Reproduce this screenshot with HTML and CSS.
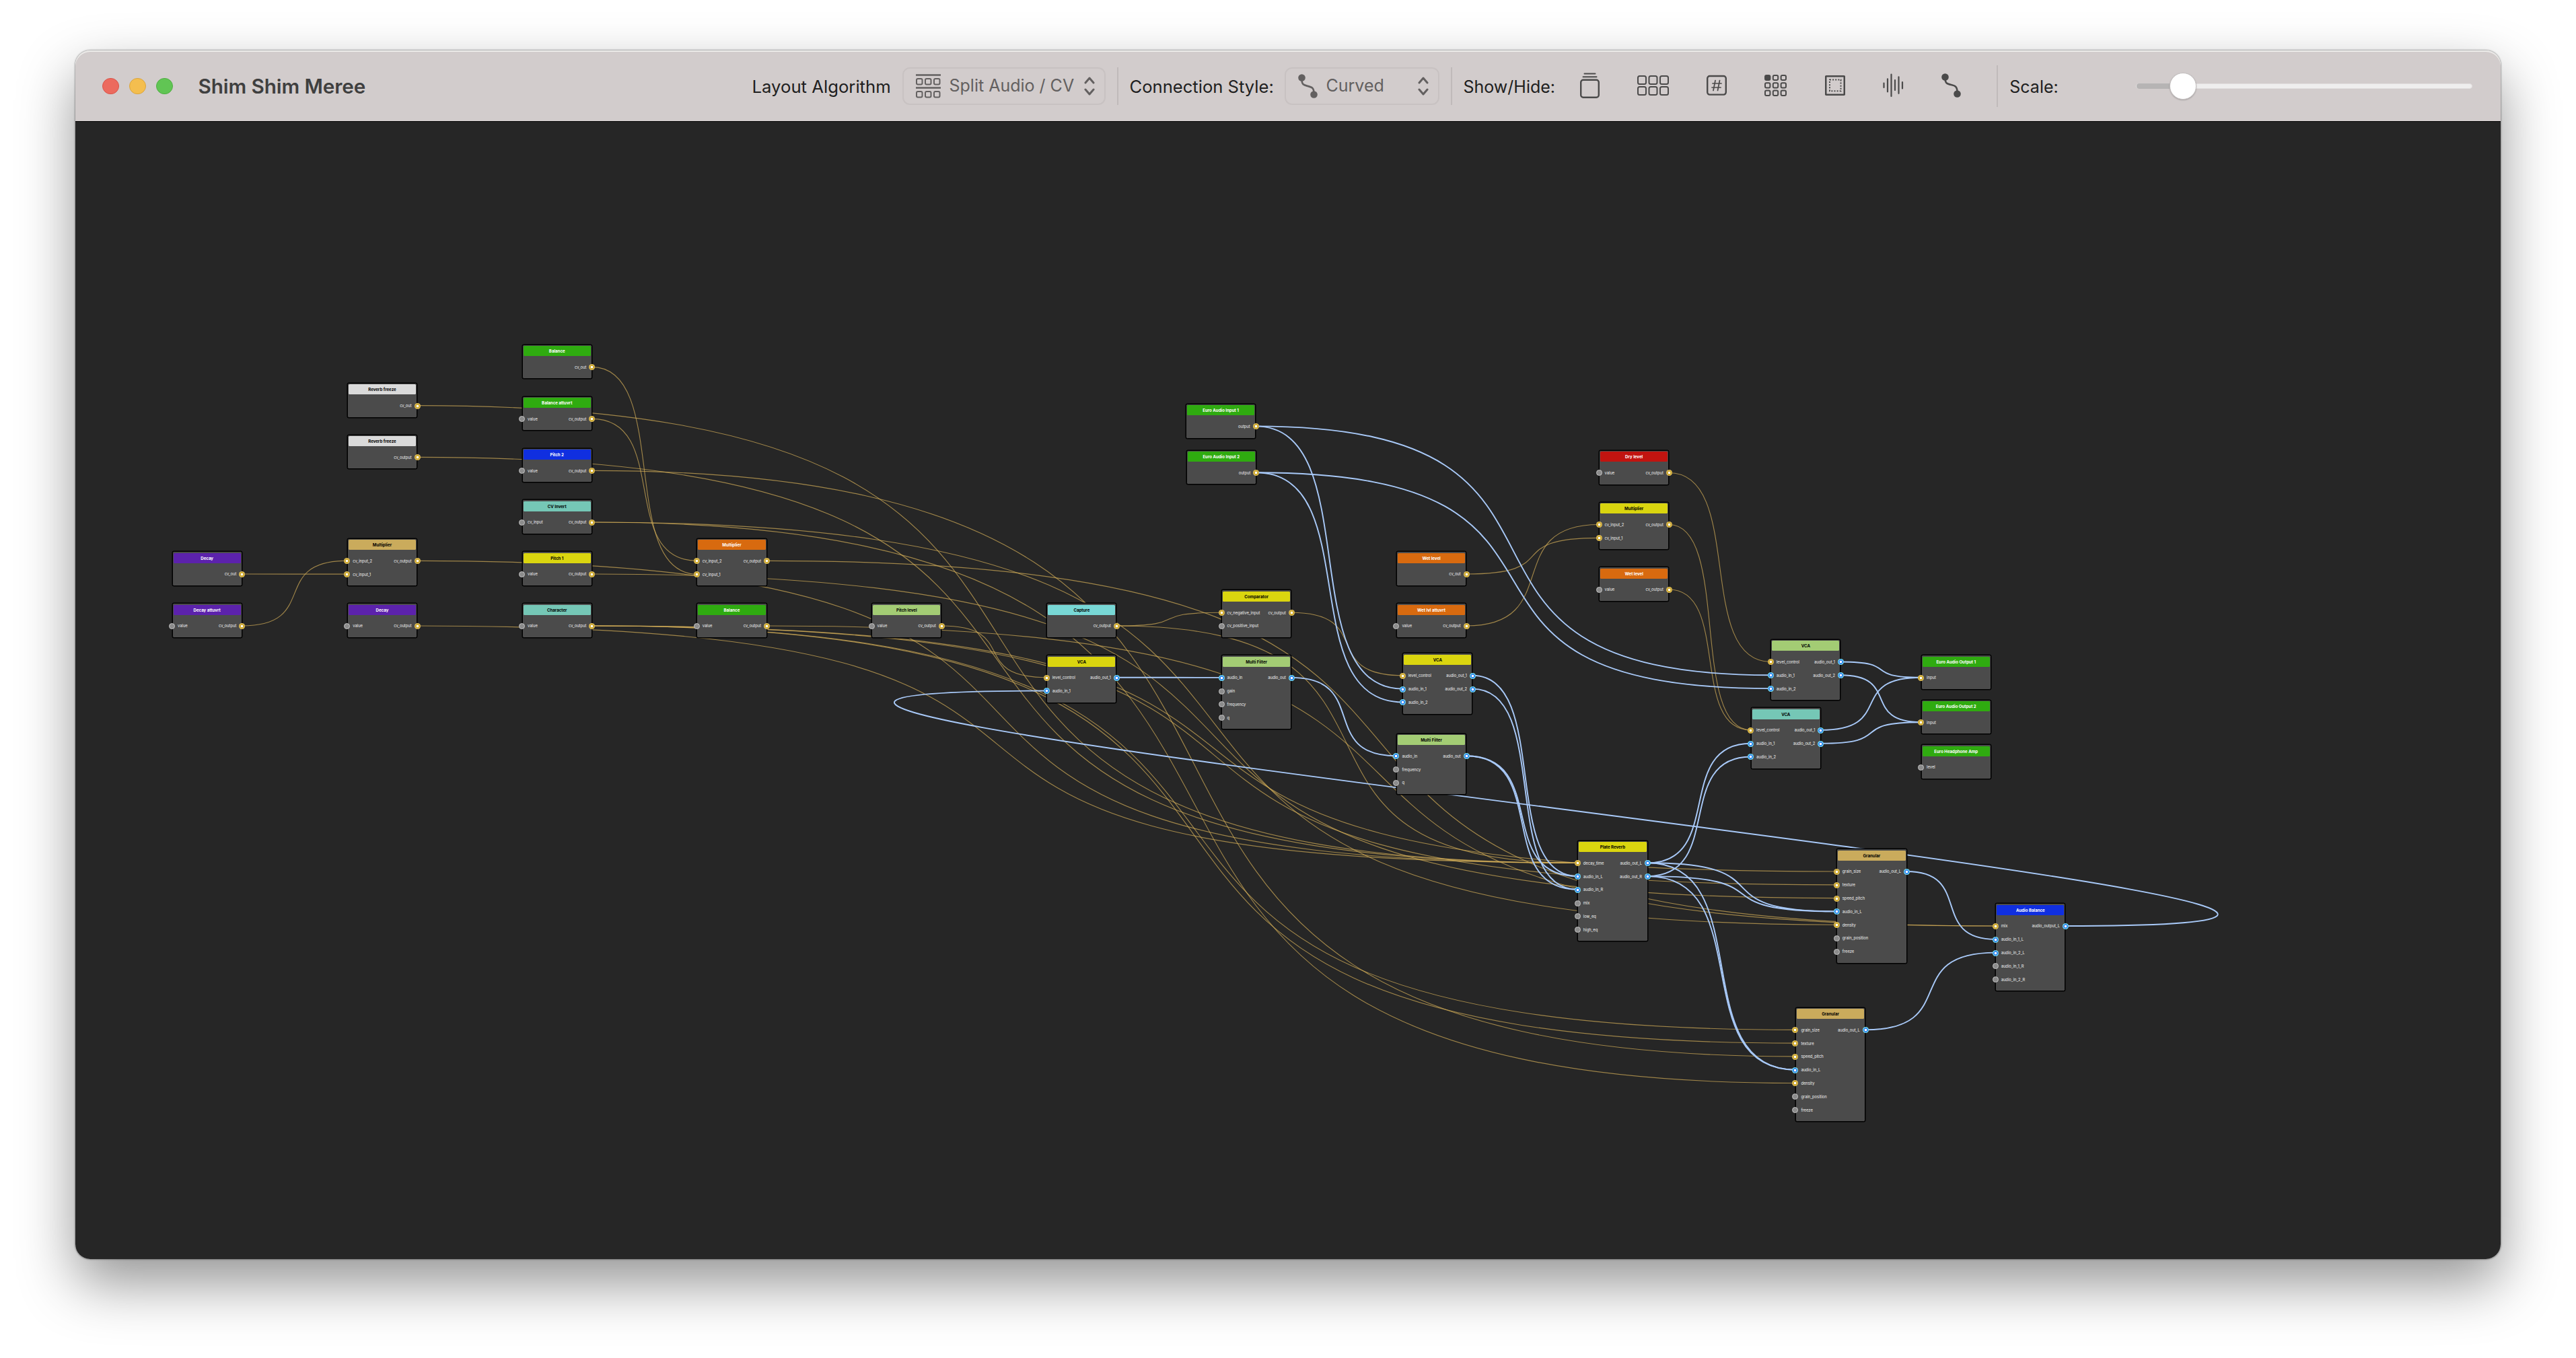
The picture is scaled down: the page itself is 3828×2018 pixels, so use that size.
FILE: index.html
```html
<!DOCTYPE html>
<html lang="en">
<head>
<meta charset="utf-8">
<title>Shim Shim Meree</title>
<link rel="stylesheet" href="styles.css">
</head>
<body>
<main class="window">
  <header class="toolbar">
    <div class="lights"><span class="light close"></span><span class="light minimize"></span><span class="light zoom"></span></div>
    <h1 class="title">Shim Shim Meree</h1>
    <div class="tools">
      <span class="label label-layout">Layout Algorithm</span>
      <button class="popup popup-layout">
        <svg class="popup-icon" width="37" height="36" viewBox="0 0 37 36" fill="none" stroke="currentColor" stroke-width="2"><path d="M0 1.5h37M0 20.5h37" stroke-width="2.4"/><rect x="1" y="7" width="8.5" height="8.5" rx="2"/><rect x="14" y="7" width="8.5" height="8.5" rx="2"/><rect x="27" y="7" width="8.5" height="8.5" rx="2"/><rect x="1" y="26" width="8.5" height="8.5" rx="2"/><rect x="14" y="26" width="8.5" height="8.5" rx="2"/><rect x="27" y="26" width="8.5" height="8.5" rx="2"/></svg>
        <span class="popup-text text-split">Split Audio / CV</span>
        <svg class="chevrons" width="16" height="28" viewBox="0 0 16 28" fill="none" stroke="currentColor" stroke-width="3" stroke-linecap="round" stroke-linejoin="round"><path d="M2 9l6-7 6 7M2 19l6 7 6-7"/></svg>
      </button>
      <i class="separator"></i>
      <span class="label label-style">Connection Style:</span>
      <button class="popup popup-style">
        <svg class="popup-icon" width="29" height="36" viewBox="0 0 29 36"><path d="M5.5 8c0 8 3 8.500 9 10s9 2 9 11" fill="none" stroke="currentColor" stroke-width="2.6"/><circle cx="5.500" cy="5.500" r="5.300" fill="currentColor"/><circle cx="23.500" cy="30.500" r="5.300" fill="currentColor"/></svg>
        <span class="popup-text text-curved">Curved</span>
        <svg class="chevrons" width="16" height="28" viewBox="0 0 16 28" fill="none" stroke="currentColor" stroke-width="3" stroke-linecap="round" stroke-linejoin="round"><path d="M2 9l6-7 6 7M2 19l6 7 6-7"/></svg>
      </button>
      <i class="separator"></i>
      <span class="label label-show">Show/Hide:</span>
      <div class="toggles">
        <svg width="29" height="40" viewBox="0 0 29 40" fill="none" stroke="currentColor" stroke-width="2.400"><path d="M6.500 1.500h16M4.500 6.200h20" stroke-width="2" stroke-linecap="round"/><rect x="1.200" y="10.700" width="26.600" height="26" rx="3.500"/></svg>
        <svg width="47" height="40" viewBox="0 0 47 40" fill="none" stroke="currentColor" stroke-width="2"><rect x="1" y="5" width="12" height="12" rx="2.500"/><rect x="17.500" y="5" width="12" height="12" rx="2.500"/><rect x="34" y="5" width="12" height="12" rx="2.500"/><rect x="1" y="21" width="12" height="12" rx="2.500"/><rect x="17.500" y="21" width="12" height="12" rx="2.500"/><rect x="34" y="21" width="12" height="12" rx="2.500"/></svg>
        <svg width="30" height="40" viewBox="0 0 30 40" fill="none" stroke="currentColor" stroke-width="2.400"><rect x="1.200" y="5" width="27.600" height="27.600" rx="3.500"/><path d="M13 11.500l-3 15M19.500 11.500l-3 15M9 16h13M8 22h13" stroke-width="1.700" stroke-linecap="round"/></svg>
        <svg width="33" height="40" viewBox="0 0 33 40" fill="none" stroke="currentColor" stroke-width="2"><rect x="1" y="4" width="7.400" height="7" rx="2" fill="currentColor"/><rect x="12.800" y="4" width="7.400" height="7" rx="2"/><rect x="24.600" y="4" width="7.400" height="7" rx="2"/><rect x="1" y="15.200" width="7.400" height="7.400" rx="2"/><rect x="12.800" y="15.200" width="7.400" height="7.400" rx="2"/><rect x="24.600" y="15.200" width="7.400" height="7.400" rx="2"/><rect x="1" y="26.600" width="7.400" height="7.400" rx="2"/><rect x="12.800" y="26.600" width="7.400" height="7.400" rx="2"/><rect x="24.600" y="26.600" width="7.400" height="7.400" rx="2"/></svg>
        <svg width="30" height="40" viewBox="0 0 30 40" fill="none" stroke="currentColor"><rect x="1.200" y="5.200" width="27.600" height="27.600" rx="1" stroke-width="2.600"/><rect x="7" y="10.500" width="16.500" height="16.700" stroke-width="2" stroke-dasharray="2 2.120"/></svg>
        <svg width="31" height="40" viewBox="0 0 31 40" fill="none" stroke="currentColor" stroke-width="2.200" stroke-linecap="round"><path d="M1.500 15.500v6.500M7 9.300v19M12.500 2.500v32.500M18 11v15M23.500 6.300v24.500M29 14v9.500"/></svg>
        <svg width="29" height="40" viewBox="0 0 29 40"><path d="M5.500 8c0 8 3 8.700 9 10s9 2.500 9 11" fill="none" stroke="currentColor" stroke-width="2.600"/><circle cx="5.500" cy="6.500" r="5.300" fill="currentColor"/><circle cx="23.500" cy="31.500" r="5.300" fill="currentColor"/></svg>
      </div>
      <i class="separator tall"></i>
      <span class="label label-scale">Scale:</span>
      <div class="slider"><span class="slider-fill"></span><span class="slider-knob"></span></div>
    </div>
  </header>
  <section class="patch" id="patch">
    <svg class="cables" id="cables" viewBox="112 181 3604 1690"></svg>
  </section>
</main>
<script src="patch.js"></script>
</body>
</html>
```
FILE: styles.css
```css
* { box-sizing: border-box; }
body {
  margin: 0;
  height: 2018px;
  overflow: hidden;
  background: #fff;
  font-family: Inter, "Liberation Sans", sans-serif;
  padding: 75px 112px 0;
}
.window {
  width: 3604px;
  height: 1796px;
  border-radius: 22px;
  box-shadow: 0 0 2px 1px rgba(0, 0, 0, .3), 0 36px 84px rgba(0, 0, 0, .42);
  display: flex;
  flex-direction: column;
}
.toolbar {
  height: 106px;
  flex: none;
  display: flex;
  align-items: center;
  padding: 1px 40px 0;
  background: #d2cccc;
  border-bottom: 1.500px solid #000;
  box-shadow: inset 0 2px 0 #ecebe9;
  border-radius: 22px 22px 0 0;
}
.lights { display: flex; gap: 15.500px; }
.light { width: 24.500px; height: 24.500px; border-radius: 50%; border: 1px solid; }
.close { background: #ec6a5e; border-color: #d9544a; }
.minimize { background: #f4be4f; border-color: #dba53c; }
.zoom { background: #61c554; border-color: #4fae42; }
.title {
  margin: 0 0 0 38px;
  width: 823px;
  font-size: 29.700px;
  font-weight: 600;
  letter-spacing: -.1px;
  line-height: 40px;
  color: #3f3f3f;
  white-space: nowrap;
}
.tools { display: flex; align-items: center; gap: 17px; }
.label {
  font-size: 25px;
  line-height: 32px;
  color: #202020;
  white-space: nowrap;
  padding-top: 1px;
}
.label-layout { width: 206px; font-size: 25.700px; }
.label-style { width: 213px; font-size: 25.600px; }
.label-show { width: 136px; }
.label-scale { width: 74px; }
.popup {
  height: 56px;
  margin: 0;
  border: 2px solid #c8c2c2;
  border-radius: 11px;
  background: none;
  font: inherit;
  color: #636060;
  display: flex;
  align-items: center;
}
.popup-layout { width: 302px; padding: 0 14px 0 18px; }
.popup-style { width: 230px; padding: 0 14px 0 18px; }
.popup-text { font-size: 25px; line-height: 32px; margin: 0 0 2px 13px; white-space: nowrap; }
.chevrons { margin-left: auto; }
.separator { width: 2px; height: 56px; background: #c0baba; }
.separator.tall { height: 62px; margin-left: 36px; }
.toggles { display: flex; gap: 56.300px; margin-left: 20px; color: #4b4a4a; }
.slider {
  width: 500px;
  height: 8px;
  border-radius: 4px;
  margin-left: 97px;
  background: #efeeee;
  border: 1px solid #e2dfdf;
  display: flex;
  align-items: center;
}
.slider-fill { width: 56px; height: 8px; flex: none; background: #b6b4b4; border-radius: 4px 0 0 4px; }
.slider-knob {
  width: 40px;
  height: 40px;
  flex: none;
  margin-left: -7px;
  border-radius: 50%;
  background: #fff;
  border: 1px solid #c4c0c0;
  box-shadow: 0 1px 2px rgba(0, 0, 0, .2);
}
.patch {
  position: relative;
  flex: 1;
  background: #262626;
  border-radius: 0 0 22px 22px;
  overflow: hidden;
}
.cables { display: block; width: 3604px; height: 1690px; fill: none; }
.cable-cv { stroke: #d8b25a; stroke-opacity: .68; stroke-width: 1.150; }
.cable-audio { stroke: #a9caf9; stroke-width: 1.900; }

.node {
  position: absolute;
  width: 104.300px;
  border: 1px solid #000;
  border-radius: 2.500px;
  box-shadow: 0 0 0 .500px #000;
  background: #4b4b4b;
  padding: 1.700px 1px 6.800px;
}
.node-title {
  height: 15px;
  border-radius: 1.500px;
  font-size: 6.100px;
  font-weight: 700;
  line-height: 15px;
  text-align: center;
  white-space: nowrap;
  color: #fff;
}
.dark { color: #000; }
.green { background: #2fab10; }
.white { background: #dadada; }
.purple { background: #5c22ac; }
.tan { background: #caab5c; }
.blue { background: #102fe0; }
.teal { background: #75c7b6; }
.yellow { background: #dad50f; }
.orange { background: #d86a0f; }
.lime { background: #a3cc74; }
.cyan { background: #78d8d6; }
.red { background: #c11410; }
.ports { display: flex; justify-content: space-between; margin: 6.700px -6.500px 0; }
.port { display: flex; align-items: center; gap: 4px; height: 19.800px; }
.outputs .port { flex-direction: row-reverse; }
.port-name { font-size: 5.800px; line-height: 8px; color: #f0f0f0; white-space: nowrap; }
.jack { width: 9px; height: 9px; border-radius: 50%; display: block; }
.jack-off { background: #8c8c8c; border: 1px solid #c4c4c4; }
.jack-cv { background: radial-gradient(circle, #fff 0 1.500px, #cda92f 2.100px 3.200px, #dfbd5a 3.700px); }
.jack-audio { background: radial-gradient(circle, #fff 0 1.500px, #2f80ee 2.100px 3px, #6fdcf0 3.600px); }
```
FILE: patch.js
```javascript
// Each module: x and y of its first jack row, title, colour, inputs, outputs.
// A port is written "kind:name"; kinds are cv, audio and off (nothing patched).
const modules = {
  decayKnob: [255.9, 853, 'Decay', 'purple', [], ['cv:cv_out']],
  decayAtt: [255.9, 930, 'Decay attuvrt', 'purple', ['off:value'], ['cv:cv_output']],
  freeze1: [516.2, 602.6, 'Reverb freeze', 'white', [], ['cv:cv_out']],
  freeze2: [516.2, 679.3, 'Reverb freeze', 'white', [], ['cv:cv_output']],
  decayMult: [516.2, 833.3, 'Multiplier', 'tan', ['cv:cv_input_2', 'cv:cv_input_1'], ['cv:cv_output']],
  decay: [516.2, 930, 'Decay', 'purple', ['off:value'], ['cv:cv_output']],
  balanceKnob: [776, 545.3, 'Balance', 'green', [], ['cv:cv_out']],
  balanceAtt: [776, 622.3, 'Balance attuvrt', 'green', ['off:value'], ['cv:cv_output']],
  pitch2: [776, 699.3, 'Pitch 2', 'blue', ['off:value'], ['cv:cv_output']],
  invert: [776, 776, 'CV Invert', 'teal', ['off:cv_input'], ['cv:cv_output']],
  pitch1: [776, 853, 'Pitch 1', 'yellow', ['off:value'], ['cv:cv_output']],
  character: [776, 930, 'Character', 'teal', ['off:value'], ['cv:cv_output']],
  balanceMult: [1035.7, 833.3, 'Multiplier', 'orange', ['cv:cv_input_2', 'cv:cv_input_1'], ['cv:cv_output']],
  balance: [1035.7, 930, 'Balance', 'green', ['off:value'], ['cv:cv_output']],
  pitchLevel: [1295.5, 930, 'Pitch level', 'lime', ['off:value'], ['cv:cv_output']],
  capture: [1555.6, 930, 'Capture', 'cyan', [], ['cv:cv_output']],
  vcaFeedback: [1555.6, 1006.7, 'VCA', 'yellow', ['cv:level_control', 'audio:audio_in_1'], ['audio:audio_out_1']],
  euroIn1: [1762.3, 633.4, 'Euro Audio Input 1', 'green', [], ['cv:output']],
  euroIn2: [1763, 702.3, 'Euro Audio Input 2', 'green', [], ['cv:output']],
  comparator: [1815.4, 910.2, 'Comparator', 'yellow', ['cv:cv_negative_input', 'off:cv_positive_input'], ['cv:cv_output']],
  filter1: [1815.4, 1006.9, 'Multi Filter', 'lime', ['audio:audio_in', 'off:gain', 'off:frequency', 'off:q'], ['audio:audio_out']],
  wetKnob: [2075.3, 853, 'Wet level', 'orange', [], ['cv:cv_out']],
  wetAtt: [2075.3, 930, 'Wet lvl attuvrt', 'orange', ['off:value'], ['cv:cv_output']],
  vcaIn: [2084.6, 1003.8, 'VCA', 'yellow', ['cv:level_control', 'audio:audio_in_1', 'audio:audio_in_2'], ['audio:audio_out_1', 'audio:audio_out_2']],
  filter2: [2075.3, 1123.3, 'Multi Filter', 'lime', ['audio:audio_in', 'off:frequency', 'off:q'], ['audio:audio_out']],
  dry: [2376.4, 702.5, 'Dry level', 'red', ['off:value'], ['cv:cv_output']],
  wetMult: [2376.4, 779.5, 'Multiplier', 'yellow', ['cv:cv_input_2', 'cv:cv_input_1'], ['cv:cv_output']],
  wet: [2376.4, 876, 'Wet level', 'orange', ['off:value'], ['cv:cv_output']],
  vcaDry: [2631.6, 983.5, 'VCA', 'lime', ['cv:level_control', 'audio:audio_in_1', 'audio:audio_in_2'], ['audio:audio_out_1', 'audio:audio_out_2']],
  vcaWet: [2602, 1084.9, 'VCA', 'teal', ['cv:level_control', 'audio:audio_in_1', 'audio:audio_in_2'], ['audio:audio_out_1', 'audio:audio_out_2']],
  euroOut1: [2855, 1006.7, 'Euro Audio Output 1', 'green', ['cv:input'], []],
  euroOut2: [2855, 1073.3, 'Euro Audio Output 2', 'green', ['cv:input'], []],
  phones: [2855, 1140, 'Euro Headphone Amp', 'green', ['off:level'], []],
  reverb: [2344.7, 1282.3, 'Plate Reverb', 'yellow', ['cv:decay_time', 'audio:audio_in_L', 'audio:audio_in_R', 'off:mix', 'off:low_eq', 'off:high_eq'], ['audio:audio_out_L', 'audio:audio_out_R']],
  granular1: [2729.7, 1295, 'Granular', 'tan', ['cv:grain_size', 'cv:texture', 'cv:speed_pitch', 'audio:audio_in_L', 'cv:density', 'off:grain_position', 'off:freeze'], ['audio:audio_out_L']],
  granular2: [2668.3, 1530.3, 'Granular', 'tan', ['cv:grain_size', 'cv:texture', 'cv:speed_pitch', 'audio:audio_in_L', 'cv:density', 'off:grain_position', 'off:freeze'], ['audio:audio_out_L']],
  audioBalance: [2965.6, 1376, 'Audio Balance', 'blue', ['cv:mix', 'audio:audio_in_1_L', 'audio:audio_in_2_L', 'off:audio_in_1_R', 'off:audio_in_2_R'], ['audio:audio_output_L']]
};

// Cables: source module, output row, target module, input row.
const cvCables = [
  ['decayKnob', 0, 'decayMult', 1], ['decayAtt', 0, 'decayMult', 0],
  ['freeze1', 0, 'reverb', 0], ['freeze2', 0, 'reverb', 0],
  ['decayMult', 0, 'reverb', 0], ['decay', 0, 'reverb', 0], ['capture', 0, 'reverb', 0],
  ['balanceKnob', 0, 'balanceMult', 1], ['balanceAtt', 0, 'balanceMult', 0],
  ['balanceMult', 0, 'audioBalance', 0], ['balance', 0, 'audioBalance', 0],
  ['pitch2', 0, 'granular2', 2], ['pitch1', 0, 'granular1', 2],
  ['invert', 0, 'granular1', 4], ['invert', 0, 'granular2', 4],
  ['character', 0, 'granular1', 0], ['character', 0, 'granular1', 1],
  ['character', 0, 'granular2', 0], ['character', 0, 'granular2', 1],
  ['pitchLevel', 0, 'vcaFeedback', 0], ['capture', 0, 'comparator', 0],
  ['comparator', 0, 'vcaIn', 0],
  ['wetKnob', 0, 'wetMult', 1], ['wetAtt', 0, 'wetMult', 0],
  ['wetMult', 0, 'vcaWet', 0], ['wet', 0, 'vcaWet', 0], ['dry', 0, 'vcaDry', 0]
];
const audioCables = [
  ['euroIn1', 0, 'vcaIn', 1], ['euroIn1', 0, 'vcaDry', 1],
  ['euroIn2', 0, 'vcaIn', 2], ['euroIn2', 0, 'vcaDry', 2],
  ['vcaFeedback', 0, 'filter1', 0], ['filter1', 0, 'filter2', 0],
  ['vcaIn', 0, 'reverb', 1], ['vcaIn', 1, 'reverb', 2],
  ['filter2', 0, 'reverb', 1], ['filter2', 0, 'reverb', 2],
  ['reverb', 0, 'vcaWet', 1], ['reverb', 1, 'vcaWet', 2],
  ['reverb', 0, 'granular1', 3], ['reverb', 1, 'granular1', 3],
  ['reverb', 0, 'granular2', 3], ['reverb', 1, 'granular2', 3],
  ['vcaDry', 0, 'euroOut1', 0], ['vcaDry', 1, 'euroOut2', 0],
  ['vcaWet', 0, 'euroOut1', 0], ['vcaWet', 1, 'euroOut2', 0],
  ['granular1', 0, 'audioBalance', 1], ['granular2', 0, 'audioBalance', 2],
  ['audioBalance', 0, 'vcaFeedback', 1]
];

const ROW = 19.8, SPAN = 103.5, ORIGIN_X = 112, ORIGIN_Y = 181;
const lightColours = ['white', 'tan', 'teal', 'yellow', 'lime', 'cyan'];

function cablePath([from, outRow, to, inRow]) {
  const x0 = modules[from][0] + SPAN, y0 = modules[from][1] + outRow * ROW;
  const x1 = modules[to][0], y1 = modules[to][1] + inRow * ROW;
  const reach = Math.abs(x1 - x0) * (x1 < x0 ? 0.78 : 0.75);
  return `M${x0} ${y0}C${x0 + reach} ${y0} ${x1 - reach} ${y1} ${x1} ${y1}`;
}

function portList(ports, side) {
  return `<div class="${side}">` + ports.map(port => {
    const [kind, name] = port.split(':');
    return `<div class="port"><i class="jack jack-${kind}"></i><span class="port-name">${name}</span></div>`;
  }).join('') + '</div>';
}

document.getElementById('cables').innerHTML =
  cvCables.map(c => `<path class="cable-cv" d="${cablePath(c)}"/>`).join('') +
  audioCables.map(c => `<path class="cable-audio" d="${cablePath(c)}"/>`).join('');

document.getElementById('patch').insertAdjacentHTML('beforeend',
  Object.values(modules).map(([x, y, title, colour, inputs, outputs]) => {
    const dark = lightColours.includes(colour) ? ' dark' : '';
    return `<article class="node" style="left:${(x - 0.4 - ORIGIN_X).toFixed(1)}px;top:${(y - 33.8 - ORIGIN_Y).toFixed(1)}px">` +
      `<div class="node-title ${colour}${dark}">${title}</div>` +
      `<div class="ports">${portList(inputs, 'inputs')}${portList(outputs, 'outputs')}</div></article>`;
  }).join(''));
```
